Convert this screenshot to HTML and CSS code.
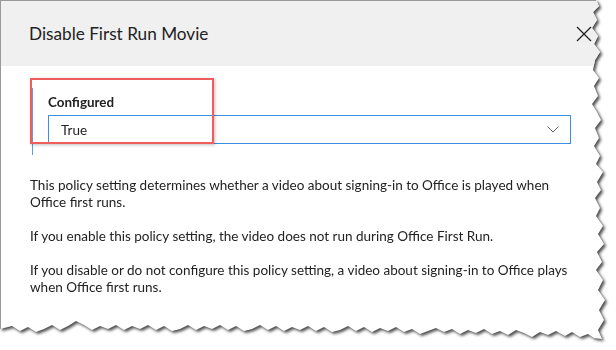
FILE: index.html
```html
<!DOCTYPE html>
<html lang="en">
  <head>
    <meta charset="UTF-8" />
    <meta name="viewport" content="width=device-width, initial-scale=1.0" />
    <title>Disable First Run Movie</title>
    <link rel="stylesheet" href="styles.css">
  </head>
  <body>
    <div class="sheet">
      <div class="dialog">
        <div class="dialog-header">
          <h1>Disable First Run Movie</h1>
          <button class="close" aria-label="Close">
            <svg width="16" height="16" viewBox="0 0 16 16">
              <path d="M1 1 L15 15 M15 1 L1 15" stroke="#222" stroke-width="1.3" fill="none" />
            </svg>
          </button>
        </div>

        <div class="dialog-body">
          <div class="field">
            <label>Configured</label>
            <div class="select">
              <span>True</span>
              <svg width="12" height="7" viewBox="0 0 12 7">
                <path d="M0.5 0.5 L6 6 L11.5 0.5" stroke="#666" stroke-width="1" fill="none" />
              </svg>
            </div>
          </div>

          <p>This policy setting determines whether a video about signing-in to Office is played when Office first runs.</p>
          <p>If you enable this policy setting, the video does not run during Office First Run.</p>
          <p>If you disable or do not configure this policy setting, a video about signing-in to Office plays when Office first runs.</p>
        </div>
      </div>
      <div class="callout"></div>
    </div>
  </body>
</html>
```

FILE: styles.css
```css
body {
  margin: 0;
  background: white;
  font-family: Lato, "Noto Sans", sans-serif;
  color: #222;
}
.sheet {
  position: relative;
  width: 616px;
  height: 350px;
  filter: drop-shadow(2px 2px 1.5px rgba(0, 0, 0, 0.7));
}
.dialog {
  height: 345px;
  background: white;
  border-left: 1px solid #999;
  border-top: 1px solid #999;
  box-sizing: border-box;
  clip-path: polygon(
    0 0, 596px 0, 599px 6px, 593px 12px, 597px 20px, 592px 28px, 598px 36px,
    594px 44px, 600px 52px, 595px 60px, 593px 70px, 599px 78px, 594px 86px,
    598px 96px, 592px 104px, 597px 112px, 601px 120px, 595px 128px, 599px 138px,
    594px 146px, 600px 156px, 596px 164px, 603px 172px, 597px 182px, 601px 190px,
    595px 198px, 600px 208px, 596px 216px, 603px 226px, 598px 234px, 604px 244px,
    597px 252px, 602px 262px, 596px 270px, 603px 280px, 598px 290px, 605px 300px,
    599px 310px, 604px 320px, 598px 330px, 602px 339px,
    594px 338px, 588px 334px, 580px 337px, 572px 332px, 565px 336px, 556px 331px,
    548px 335px, 540px 332px, 532px 337px, 524px 333px, 516px 330px, 508px 335px,
    500px 331px, 492px 334px, 484px 329px, 476px 333px, 468px 330px, 460px 334px,
    452px 329px, 444px 332px, 436px 328px, 428px 331px, 420px 334px, 412px 329px,
    404px 332px, 396px 327px, 388px 331px, 380px 328px, 372px 332px, 364px 327px,
    356px 331px, 348px 326px, 340px 330px, 332px 332px, 324px 327px, 316px 331px,
    308px 326px, 300px 330px, 292px 327px, 284px 331px, 276px 326px, 268px 330px,
    260px 325px, 252px 329px, 244px 331px, 236px 326px, 228px 330px, 220px 325px,
    212px 329px, 204px 326px, 196px 330px, 188px 325px, 180px 329px, 172px 331px,
    164px 326px, 156px 330px, 148px 325px, 140px 329px, 132px 326px, 124px 330px,
    116px 325px, 108px 329px, 100px 326px, 92px 330px, 84px 325px, 76px 321px,
    68px 326px, 60px 330px, 52px 325px, 44px 329px, 36px 332px, 28px 327px,
    20px 331px, 12px 326px, 0 329px
  );
}
.dialog-header {
  display: flex;
  align-items: center;
  justify-content: space-between;
  height: 65px;
  padding: 0 24px 0 28px;
  background: #f0f0f0;
}
.dialog-header h1 {
  margin: 0;
  font-size: 17.2px;
  font-weight: normal;
  color: #222;
}
.close {
  display: flex;
  padding: 0;
  border: none;
  background: none;
}
.dialog-body {
  padding: 22px 40px 0 29px;
}
.field {
  margin: 0 5px 0 2px;
  padding: 4px 0 11px 15px;
  border-left: 1px solid #5a9fe0;
}
.field label {
  display: block;
  font-size: 13.4px;
  font-weight: bold;
  line-height: 20px;
  margin-bottom: 3px;
}
.select {
  display: flex;
  align-items: center;
  justify-content: space-between;
  height: 27px;
  padding: 0 11px 0 12px;
  border: 1px solid #3c8fdc;
  font-size: 13.5px;
}
.dialog-body p {
  margin: 22px 0 0 0;
  font-size: 13.5px;
  line-height: 17px;
}
.dialog-body p + p {
  margin-top: 17px;
}
.callout {
  position: absolute;
  left: 30px;
  top: 78px;
  width: 180px;
  height: 62px;
  border: 2px solid #ef5d5d;
  box-shadow: 1px 1px 3px rgba(0, 0, 0, 0.25);
}
```
